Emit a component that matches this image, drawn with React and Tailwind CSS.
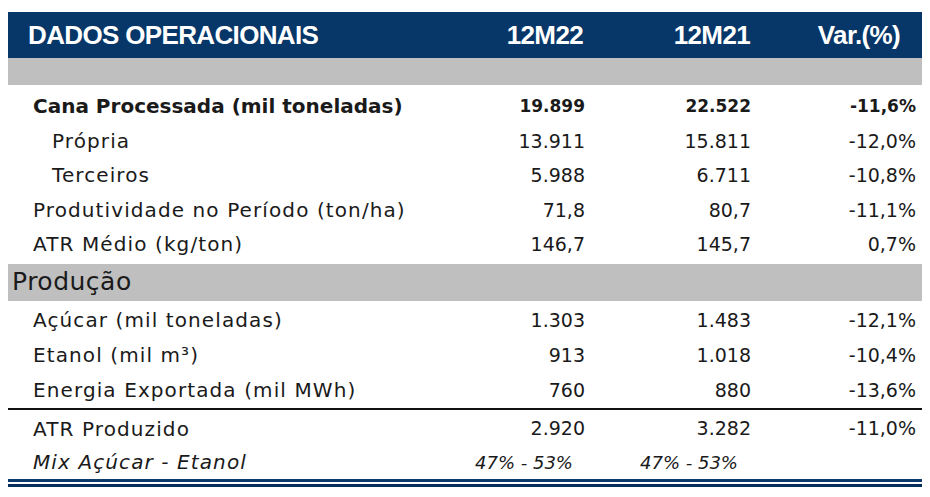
const body = { fontFamily: '"DejaVu Sans", sans-serif' };
const head = { fontFamily: '"Liberation Sans", Arial, sans-serif' };

const topRows = [
  { label: "Cana Processada (mil toneladas)", a: "19.899", b: "22.522", c: "-11,6%", bold: true },
  { label: "Própria", a: "13.911", b: "15.811", c: "-12,0%", indent: true },
  { label: "Terceiros", a: "5.988", b: "6.711", c: "-10,8%", indent: true },
  { label: "Produtividade no Período (ton/ha)", a: "71,8", b: "80,7", c: "-11,1%" },
  { label: "ATR Médio (kg/ton)", a: "146,7", b: "145,7", c: "0,7%" },
];

const prodRows = [
  { label: "Açúcar (mil toneladas)", a: "1.303", b: "1.483", c: "-12,1%" },
  { label: "Etanol (mil m³)", a: "913", b: "1.018", c: "-10,4%" },
  { label: "Energia Exportada (mil MWh)", a: "760", b: "880", c: "-13,6%" },
];

const cols = "grid grid-cols-[462px_118px_166px_168px]";

const Row = ({ row, h = "h-[34.5px]" }) => (
  <div className={`${cols} ${h} items-center text-[#1a1a1a]`} style={body}>
    <div
      className={`${row.indent ? "pl-[44px]" : "pl-[25px]"} ${
        row.bold ? "text-[20px] font-bold" : "text-[20px] tracking-[1.1px]"
      } whitespace-nowrap`}
    >
      {row.label}
    </div>
    <div className={`text-right pr-[3px] ${row.bold ? "text-[17px] font-bold" : "text-[19px]"}`}>
      {row.a}
    </div>
    <div className={`text-right pr-[3px] ${row.bold ? "text-[17px] font-bold" : "text-[19px]"}`}>
      {row.b}
    </div>
    <div className={`text-right pr-[6px] ${row.bold ? "text-[17px] font-bold" : "text-[19px]"}`}>
      {row.c}
    </div>
  </div>
);

export default function App() {
  return (
    <div className="min-h-screen bg-white pt-[12px] pl-[8px]">
      <div className="w-[914px]">
        <div
          className={`${cols} h-[46px] items-center bg-[#063768] text-white text-[26px] font-bold tracking-tight`}
          style={head}
        >
          <div className="pl-[20px]">DADOS OPERACIONAIS</div>
          <div className="text-right pr-[5px]">12M22</div>
          <div className="text-right pr-[4px]">12M21</div>
          <div className="text-right pr-[22px]">Var.(%)</div>
        </div>
        <div className="h-[27px] bg-[#bfbfbf]" />

        <div className="pt-[4px] pb-[2px]">
          {topRows.map((r) => (
            <Row key={r.label} row={r} />
          ))}
        </div>

        <div
          className="h-[37px] flex items-center bg-[#bfbfbf] pl-[4px] text-[25px] tracking-[0.5px] text-[#1a1a1a]"
          style={body}
        >
          Produção
        </div>

        <div className="pt-[2px]">
          {prodRows.map((r) => (
            <Row key={r.label} row={r} h="h-[35px]" />
          ))}
        </div>
        <div className="h-[2px] bg-[#111]" />
        <div className="pt-[2px]">
          <Row row={{ label: "ATR Produzido", a: "2.920", b: "3.282", c: "-11,0%" }} h="h-[34px]" />
          <div className={`${cols} h-[33px] items-center text-[#1a1a1a] italic`} style={body}>
            <div className="pl-[25px] text-[20px] tracking-[1.1px]">Mix Açúcar - Etanol</div>
            <div className="pl-[5px] text-[18px] whitespace-nowrap">47% - 53%</div>
            <div className="pl-[52px] text-[18px] whitespace-nowrap">47% - 53%</div>
            <div />
          </div>
        </div>
        <div className="h-[3px] bg-[#0b3a6b]" />
        <div className="h-[2px]" />
        <div className="h-[3px] bg-[#06305c]" />
      </div>
    </div>
  );
}
